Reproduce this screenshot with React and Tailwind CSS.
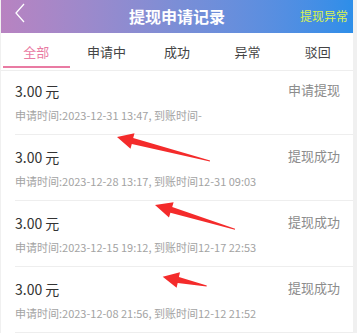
import React from "react";

const tabs = ["全部", "申请中", "成功", "异常", "驳回"];
const items = [
  { status: "申请提现", sub: "申请时间:2023-12-31 13:47, 到账时间-" },
  { status: "提现成功", sub: "申请时间:2023-12-28 13:17, 到账时间12-31 09:03" },
  { status: "提现成功", sub: "申请时间:2023-12-15 19:12, 到账时间12-17 22:53" },
  { status: "提现成功", sub: "申请时间:2023-12-08 21:56, 到账时间12-12 21:52" },
];

export default function App() {
  return (
    <div
      className="relative w-[357px] h-[333px] overflow-hidden bg-[#f0f0f0] pl-px pr-[4px]"
      style={{ fontFamily: '"Noto Sans CJK SC", "Noto Sans", sans-serif' }}
    >
      <div className="h-full bg-white flex flex-col">
        <div className="relative h-[35px] flex items-center justify-center bg-gradient-to-r from-[#b883c1] via-[#7b8ed6] to-[#2c8ee9]">
          <svg className="absolute left-[13px] top-[3px]" width="12" height="20" viewBox="0 0 12 20">
            <polyline points="10,1 2,10 10,19" fill="none" stroke="white" strokeWidth="1.3" />
          </svg>
          <span className="text-white text-[16px] font-bold leading-none">提现申请记录</span>
          <span className="absolute right-[5px] top-[10px] text-[12px] leading-none text-[#dcf34c]">提现异常</span>
        </div>
        <div className="flex h-[41px] border-b border-[#eeeeee]">
          {tabs.map((t, i) => (
            <div key={t} className="relative flex-1 flex items-center justify-center">
              <span className={i === 0 ? "text-[13px] text-[#e97ba3]" : "text-[13px] text-[#444444]"}>{t}</span>
              {i === 0 && <div className="absolute bottom-[2px] left-[2px] right-[1px] h-[2px] bg-[#e97ba3]" />}
            </div>
          ))}
        </div>
        <div className="flex flex-col">
          {items.map((it, i) => (
            <div key={i} className={i === 0 ? "ml-[14px] pr-[13px] pt-[10px] pb-[11px] border-b border-[#eeeeee]" : "ml-[14px] pr-[13px] pt-[12px] pb-[11px] border-b border-[#eeeeee]"}>
              <div className="flex items-center justify-between h-[20px]">
                <span className="text-[14px] text-[#333333] leading-[20px]">3.00 元</span>
                <span className="text-[13px] text-[#8c8c8c] leading-[20px] -mt-[2px]">{it.status}</span>
              </div>
              <div className="mt-[6px] text-[11px] leading-[16px] text-[#a3a3a3] whitespace-nowrap">{it.sub}</div>
            </div>
          ))}
        </div>
      </div>
      <svg className="absolute inset-0 pointer-events-none" width="357" height="333" viewBox="0 0 357 333">
        <polygon
          fill="#f42b2b"
          points="117,137 134.5,133.3 133.2,138.1 210.1,160.4 209.9,161.6 131.8,143.9 130.5,148.7"
        />
        <polygon
          fill="#f42b2b"
          points="155,205 173.6,202.2 172.2,207 235.1,228.8 234.9,229.8 170.4,212.8 169,217.6"
        />
        <polygon
          fill="#f42b2b"
          points="162.7,276.7 180,272.2 178.9,277.1 206.8,285.5 206.6,286.5 177.7,282.9 176.6,287.8"
        />
      </svg>
    </div>
  );
}
